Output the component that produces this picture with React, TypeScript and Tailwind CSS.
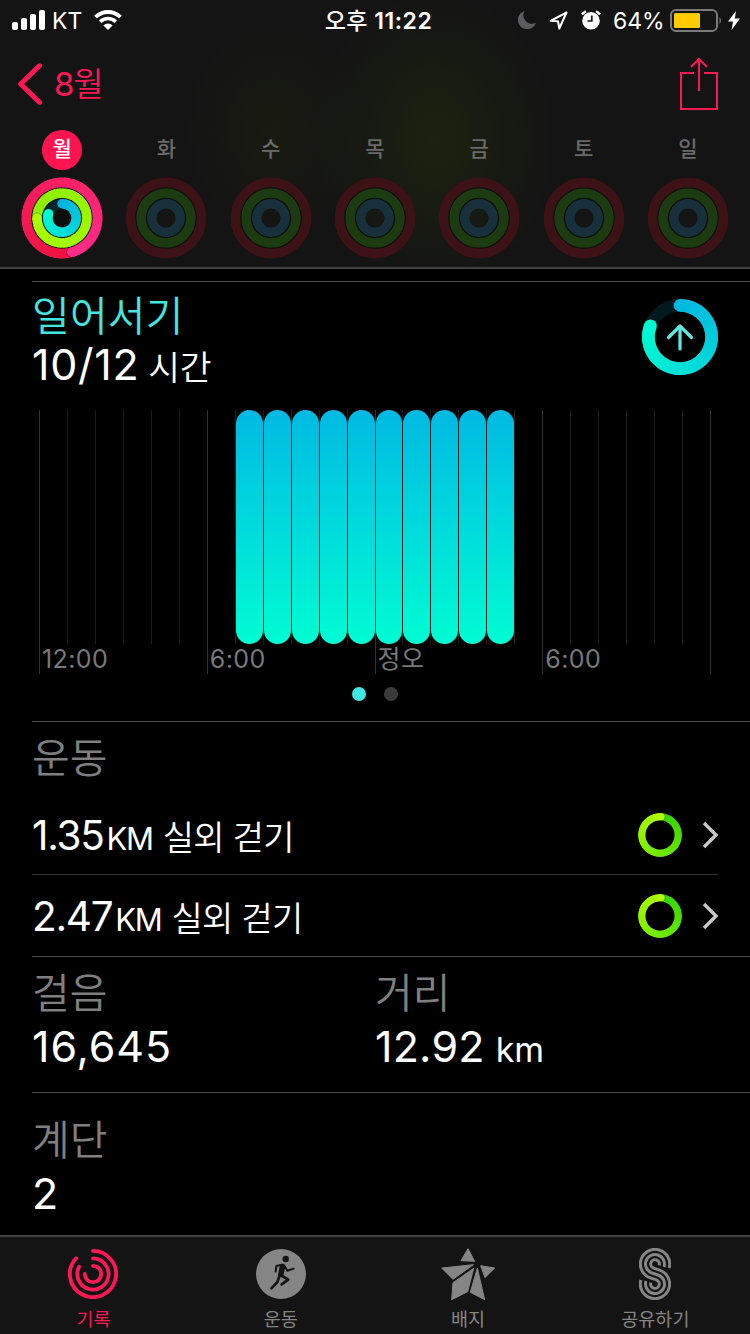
import clsx from 'clsx';
import React from 'react';

type Rgb = [number, number, number];

const DAYS = ['월', '화', '수', '목', '금', '토', '일'];

const HOUR_LABELS: Record<number, string> = {
  0: '12:00',
  6: '6:00',
  12: '정오',
  18: '6:00',
};

const WORKOUTS = [
  { id: 1, distance: '1.35', name: '실외 걷기' },
  { id: 2, distance: '2.47', name: '실외 걷기' },
];

const point = (c: number, r: number, deg: number) => {
  const rad = (deg * Math.PI) / 180;
  return [c + r * Math.sin(rad), c - r * Math.cos(rad)];
};

const mix = (a: Rgb, b: Rgb, t: number) =>
  `rgb(${a.map((v, i) => Math.round(v + (b[i] - v) * t)).join(',')})`;

// Arc whose colour changes along its length, with round ends
function Sweep({
  c,
  r,
  width,
  from,
  to,
  start,
  end,
  shadow,
}: {
  c: number;
  r: number;
  width: number;
  from: number;
  to: number;
  start: Rgb;
  end: Rgb;
  shadow?: boolean;
}) {
  const steps = 60;
  const step = (to - from) / steps;
  const [sx, sy] = point(c, r, from);
  const [ex, ey] = point(c, r, to);
  const [hx, hy] = point(c, r, to + 50 / r);

  return (
    <g>
      <circle cx={sx} cy={sy} r={width / 2} fill={mix(start, end, 0)} />
      {Array.from({ length: steps }, (_, i) => {
        const a = from + i * step;
        const [x1, y1] = point(c, r, a);
        const [x2, y2] = point(c, r, a + step + (i < steps - 1 ? 5 : 0));
        return (
          <path
            key={i}
            d={`M${x1} ${y1}A${r} ${r} 0 0 1 ${x2} ${y2}`}
            stroke={mix(start, end, i / steps)}
            strokeWidth={width}
            fill="none"
          />
        );
      })}
      {shadow && (
        <circle cx={hx} cy={hy} r={width / 2} fill="#000" fillOpacity="0.3" />
      )}
      <circle cx={ex} cy={ey} r={width / 2} fill={mix(start, end, 1)} />
    </g>
  );
}

function ActiveRings() {
  return (
    <svg className="size-[82px]" viewBox="0 0 82 82">
      <circle cx="41" cy="41" r="36" fill="#0b0d0c" />
      <Sweep c={41} r={35.6} width={9.6} from={164} to={524} start={[238, 18, 62]} end={[255, 45, 138]} shadow />
      <Sweep c={41} r={24.9} width={9.4} from={-90} to={270} start={[140, 238, 0]} end={[170, 255, 0]} shadow />
      <circle cx="41" cy="41" r="14.2" fill="none" stroke="#06222b" strokeWidth="9.4" />
      <Sweep c={41} r={14.2} width={9.4} from={0} to={288} start={[0, 180, 222]} end={[0, 250, 212]} />
    </svg>
  );
}

function EmptyRings() {
  return (
    <svg className="size-[82px]" viewBox="0 0 82 82" fill="none">
      <circle cx="41" cy="41" r="24.8" stroke="#0d100d" strokeWidth="31" />
      <circle cx="41" cy="41" r="35.6" stroke="#3d1217" strokeWidth="9.6" />
      <circle cx="41" cy="41" r="24.9" stroke="#1d3b10" strokeWidth="9.4" />
      <circle cx="41" cy="41" r="14.2" stroke="#17303b" strokeWidth="9.4" />
    </svg>
  );
}

function StatusBar() {
  return (
    <div className="grid h-10 grid-cols-3 items-center text-[23px] leading-none text-white">
      <div className="flex items-center pl-3">
        <svg className="h-5 w-[33px]" viewBox="0 0 33 20" fill="#fff">
          <rect x="0" y="12" width="6" height="8" rx="2" />
          <rect x="9" y="8" width="6" height="12" rx="2" />
          <rect x="18" y="4" width="6" height="16" rx="2" />
          <rect x="27" y="0" width="6" height="20" rx="2" />
        </svg>
        <span className="ml-[7px] w-[42px] pt-[2px]">KT</span>
        <svg className="h-5 w-7" viewBox="0 0 28 20" fill="none" stroke="#fff">
          <path d="M1.6 7.2A17.5 17.5 0 0 1 26.4 7.2" strokeWidth="4" />
          <path d="M6.2 11.8A11 11 0 0 1 21.8 11.8" strokeWidth="3.6" />
          <path d="M14 20L9.4 15.5A6.5 6.5 0 0 1 18.6 15.5Z" fill="#fff" stroke="none" />
        </svg>
      </div>
      <div className="pt-[2px] pl-[7px] text-center font-semibold tracking-[0.5px]">
        <span className="font-medium">오후</span> 11:22
      </div>
      <div className="flex items-center justify-end pr-[10px]">
        <svg className="size-[18px]" viewBox="0 0 18 18" fill="#5c5c5e">
          <path d="M6.5 0A9.3 9.3 0 1 0 18 11.8A8.6 8.6 0 0 1 6.5 0Z" />
        </svg>
        <svg className="ml-[13px] size-[19px]" viewBox="0 0 19 19" fill="none" stroke="#fff" strokeWidth="2" strokeLinejoin="round">
          <path d="M17.5 1.5L1.6 9.8L9 10.2L10.3 17.5Z" />
        </svg>
        <svg className="ml-[13px] size-5" viewBox="0 0 20 20" fill="none">
          <circle cx="10" cy="10.8" r="8.8" fill="#fff" />
          <path d="M1 4.5A12 12 0 0 1 5 1.2M19 4.5A12 12 0 0 0 15 1.2" stroke="#fff" strokeWidth="2.4" />
          <path d="M10.8 5.5V11H6.5" stroke="#141414" strokeWidth="1.7" />
        </svg>
        <span className="ml-3 w-[57px] pt-[2px] whitespace-nowrap">64%</span>
        <svg className="h-[23px] w-[53px]" viewBox="0 0 53 23">
          <rect x="1" y="1" width="46" height="21" rx="5" fill="none" stroke="#7b7b7b" strokeWidth="2" />
          <rect x="4" y="4" width="26" height="15" rx="1.5" fill="#fc0" />
          <path d="M49.5 8A5 5 0 0 1 49.5 15Z" fill="#7b7b7b" />
        </svg>
        <svg className="ml-[5px] h-[19px] w-3" viewBox="0 0 12 19" fill="#fff">
          <path d="M8 0L0 10.6H5L3.6 19L12 7.6H6.8Z" />
        </svg>
      </div>
    </div>
  );
}

function Header() {
  return (
    <header className="h-[269px] border-b-2 border-[#424242] bg-[#141414] bg-[radial-gradient(ellipse_120px_150px_at_435px_140px,rgba(50,75,0,0.26),transparent),radial-gradient(ellipse_90px_110px_at_275px_130px,rgba(50,65,0,0.16),transparent)]">
      <StatusBar />
      <div className="flex h-[90px] items-center justify-between pr-8 pb-[3px] pl-[17px]">
        <div className="flex items-center text-[#fa1955]">
          <svg className="h-[42px] w-[27px]" viewBox="0 0 27 42" fill="none" stroke="currentColor" strokeWidth="5" strokeLinecap="round" strokeLinejoin="round">
            <path d="M22.5 2.8L3.7 21L22.5 39.2" />
          </svg>
          <span className="ml-[10px] pt-px text-[33px] leading-[40px] font-[350] tracking-[-1.3px]">
            <span className="font-normal">8</span>월
          </span>
        </div>
        <svg className="h-[53px] w-[38px]" viewBox="0 0 38 53" fill="none" stroke="#fa1955" strokeWidth="2">
          <path d="M14 16H1V52H37V16H24" />
          <path d="M19 34V2M11 10L19 2L27 10" />
        </svg>
      </div>
      <div className="grid grid-cols-7 px-[10px]">
        {DAYS.map((day, i) => (
          <div key={day} className="flex flex-col items-center">
            <div
              className={clsx(
                'flex size-10 items-center justify-center rounded-full pb-[3px] text-[21px] leading-none font-medium',
                i === 0 ? 'bg-[#ff1450] text-white' : 'text-[#6a6a6a]'
              )}
            >
              {day}
            </div>
            <div className="mt-[7px]">
              {i === 0 ? <ActiveRings /> : <EmptyRings />}
            </div>
          </div>
        ))}
      </div>
    </header>
  );
}

function StandChart() {
  return (
    <div className="ml-[7px] flex h-[264px] items-start">
      <div className="grid w-[671px] grid-cols-24 items-start">
        {Array.from({ length: 24 }, (_, hour) => (
          <div
            key={hour}
            className={clsx(
              'border-l',
              hour % 6 === 0
                ? 'h-[264px] border-[#333]'
                : 'h-[234px] border-[#1e1e1e]'
            )}
          >
            <div
              className={clsx(
                'h-[234px]',
                hour >= 7 &&
                  hour < 17 &&
                  'rounded-full bg-linear-to-b from-[#00b9e2] to-[#00fcd2]'
              )}
            />
            {HOUR_LABELS[hour] && (
              <div className="pl-[2px] text-[25px] leading-[30px] tracking-[0.4px] whitespace-nowrap text-[#787878]">
                {HOUR_LABELS[hour]}
              </div>
            )}
          </div>
        ))}
      </div>
      <div className="h-[264px] w-px bg-[#333]" />
    </div>
  );
}

function StandSection() {
  return (
    <section className="mt-3 ml-8 h-[440px] border-t border-[#4a4a4a]">
      <div className="flex h-[128px] justify-between pr-8">
        <div className="pt-[10px]">
          <h2 className="text-[41px] leading-[48px] font-[350] tracking-[0.2px] text-[#43e5df]">
            일어서기
          </h2>
          <p className="-mt-px text-[43px] leading-[50px] tracking-[0.7px] text-white">
            10/12
            <span className="ml-[9px] text-[34.5px] font-[350] tracking-[-0.3px]">
              시간
            </span>
          </p>
        </div>
        <svg className="mt-[17px] size-[76px]" viewBox="0 0 76 76" fill="none">
          <circle cx="38" cy="38" r="31.6" stroke="#03191f" strokeWidth="12.6" />
          <Sweep c={38} r={31.6} width={12.6} from={0} to={291} start={[0, 184, 224]} end={[0, 252, 210]} />
          <path d="M38 50V27M26.5 38.5L38 27L49.5 38.5" stroke="#5ce9e0" strokeWidth="3.2" strokeLinecap="round" strokeLinejoin="round" />
        </svg>
      </div>
      <StandChart />
      <div className="mt-[13px] flex justify-center gap-[18px] pr-8">
        <span className="size-[14px] rounded-full bg-[#3fe6e3]" />
        <span className="size-[14px] rounded-full bg-[#3a3a3a]" />
      </div>
    </section>
  );
}

function WorkoutSection() {
  return (
    <section className="ml-8 h-[235px] border-t border-[#4a4a4a]">
      <h2 className="h-[71px] pt-3 text-[41px] leading-[48px] font-[350] text-[#7f7f7f]">
        운동
      </h2>
      {WORKOUTS.map((workout, i) => (
        <div
          key={workout.id}
          className={clsx(
            'mr-8 flex items-center',
            i === 0 ? 'h-[82px] border-b border-[#333] pt-[2px]' : 'h-[81px]'
          )}
        >
          <p className="flex-1 pt-[6px] text-[40.5px] leading-[50px] tracking-[-1.3px] text-white">
            {workout.distance}
            <span className="ml-[3px] text-[31px]">KM</span>
            <span className="ml-[10px] text-[34px] font-[350] tracking-[-0.7px]">
              {workout.name}
            </span>
          </p>
          <svg className="size-11" viewBox="0 0 44 44">
            <Sweep c={22} r={18.2} width={7} from={4} to={364} start={[50, 212, 0]} end={[178, 255, 0]} shadow />
          </svg>
          <svg className="ml-5 h-7 w-4" viewBox="0 0 16 28" fill="none" stroke="#c7c7cc" strokeWidth="3.4">
            <path d="M2 2L14 14L2 26" />
          </svg>
        </div>
      ))}
    </section>
  );
}

function Stat({
  label,
  value,
  unit,
  className,
}: {
  label: string;
  value: string;
  unit?: string;
  className?: string;
}) {
  return (
    <div>
      <h2 className="text-[41px] leading-[48px] font-[350] text-[#7f7f7f]">
        {label}
      </h2>
      <p className={clsx('mt-1 text-[43px] leading-[50px] text-white', className)}>
        {value}
        {unit && (
          <span className="ml-[11px] text-[34px] tracking-normal">{unit}</span>
        )}
      </p>
    </div>
  );
}

function HistoryIcon() {
  return (
    <svg className="mr-px size-[50px]" viewBox="0 0 50 50" fill="none" stroke="#fa1955" strokeWidth="3.8" strokeLinecap="round">
      <path d="M25 1.9A23.1 23.1 0 1 1 8.1 9.2" />
      <path d="M25 9.4A15.6 15.6 0 1 1 11.2 17.7" />
      <path d="M25 16.8A8.2 8.2 0 1 1 16.8 25" />
    </svg>
  );
}

function RunnerIcon() {
  return (
    <svg className="size-[50px]" viewBox="0 0 50 50" fill="none" stroke="#141414" strokeLinecap="round" strokeLinejoin="round">
      <circle cx="25" cy="25" r="25" fill="#858585" stroke="none" />
      <circle cx="29.7" cy="10" r="3.2" fill="#141414" stroke="none" />
      <path d="M26.5 17.5L24.8 25.5" strokeWidth="5.6" />
      <path d="M26 15.8L20.4 17L19.6 22.6" strokeWidth="2" />
      <path d="M28.5 17L31.4 21.8L37.6 19.6" strokeWidth="2" />
      <path d="M25.5 26.5L32.2 30.6L25.6 35.4" strokeWidth="2.8" />
      <path d="M23.4 27L21.4 33L15.4 39.4" strokeWidth="2.6" />
    </svg>
  );
}

function BadgeIcon() {
  return (
    <svg className="h-14 w-[54px]" viewBox="0 0 162 168" fill="#858585" stroke="#858585" strokeWidth="3" strokeLinejoin="round">
      <path d="M81 8L60 44L101 46Z" />
      <path d="M2 66L97 56L36 100Z" />
      <path d="M36 110L98 67L80 137L32 161Z" />
      <path d="M109 66L131 161L88 139Z" />
      <path d="M119 59L161 66L132 95Z" />
    </svg>
  );
}

function ShareIcon() {
  return (
    <svg className="h-[52px] w-8" viewBox="-48 -48 96 156" fill="none" stroke="#858585" strokeWidth="9">
      <path d="M42.5 12A44 44 0 1 0 -13.7 41.8L4.1 47.65A13 13 0 1 1 -12.5 56" />
      <path d="M27 9A28.5 28.5 0 1 0 -8.9 27.1L8.9 32.9A28.5 28.5 0 1 1 -27 51" />
      <path d="M12.5 4A13 13 0 1 0 -4.1 12.35L13.7 18.2A44 44 0 1 1 -42.5 48" />
    </svg>
  );
}

const TABS = [
  { label: '기록', icon: <HistoryIcon />, active: true },
  { label: '운동', icon: <RunnerIcon /> },
  { label: '배지', icon: <BadgeIcon /> },
  { label: '공유하기', icon: <ShareIcon /> },
];

function TabBar() {
  return (
    <nav className="grid h-[99px] grid-cols-4 border-t-2 border-[#424242] bg-[#141414] pr-px">
      {TABS.map((tab) => (
        <div key={tab.label} className="flex flex-col items-center pt-[9px]">
          <div className="flex h-14 items-center">{tab.icon}</div>
          <span
            className={clsx(
              'mt-[5px] text-[18.5px] leading-[24px]',
              tab.active ? 'text-[#fa1955]' : 'text-[#858585]'
            )}
          >
            {tab.label}
          </span>
        </div>
      ))}
    </nav>
  );
}

function App() {
  return (
    <div className="flex h-[1334px] w-[750px] flex-col overflow-hidden bg-black font-['Inter','Noto_Sans_CJK_KR',sans-serif]">
      <Header />
      <main className="flex-1">
        <StandSection />
        <WorkoutSection />
        <section className="ml-8 grid h-[136px] grid-cols-[343px_1fr] border-t border-[#4a4a4a] pt-3">
          <Stat label="걸음" value="16,645" className="tracking-[0.9px]" />
          <Stat label="거리" value="12.92" unit="km" className="tracking-[0.2px]" />
        </section>
        <section className="ml-8 border-t border-[#4a4a4a] pt-[23px]">
          <Stat label="계단" value="2" />
        </section>
      </main>
      <TabBar />
    </div>
  );
}

export default App;
